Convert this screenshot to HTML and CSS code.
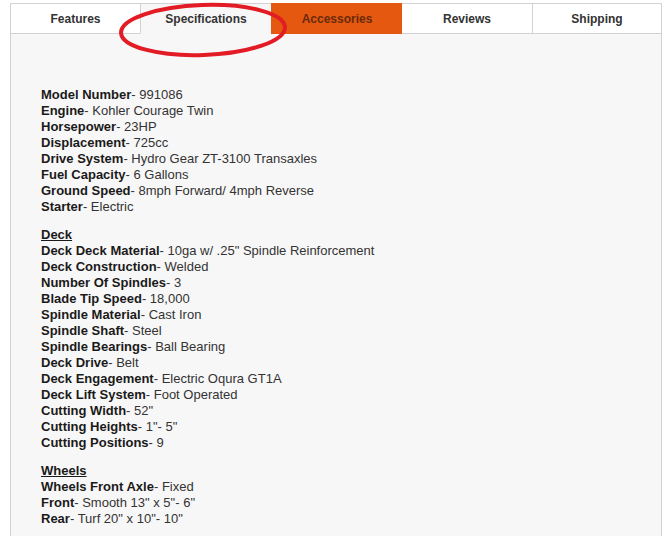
FILE: index.html
```html
<!DOCTYPE html>
<html>
<head>
<meta charset="utf-8">
<link rel="stylesheet" href="styles.css">
</head>
<body>
<div class="wrap">
  <div class="tabs">
    <div class="tab">Features</div>
    <div class="tab active">Specifications</div>
    <div class="tab orange">Accessories</div>
    <div class="tab">Reviews</div>
    <div class="tab last">Shipping</div>
  </div>
  <div class="panel">
    <div class="group">
      <div><b>Model Number</b>- 991086</div>
      <div><b>Engine</b>- Kohler Courage Twin</div>
      <div><b>Horsepower</b>- 23HP</div>
      <div><b>Displacement</b>- 725cc</div>
      <div><b>Drive System</b>- Hydro Gear ZT-3100 Transaxles</div>
      <div><b>Fuel Capacity</b>- 6 Gallons</div>
      <div><b>Ground Speed</b>- 8mph Forward/ 4mph Reverse</div>
      <div><b>Starter</b>- Electric</div>
    </div>
    <div class="group">
      <div class="head">Deck</div>
      <div><b>Deck Deck Material</b>- 10ga w/ .25" Spindle Reinforcement</div>
      <div><b>Deck Construction</b>- Welded</div>
      <div><b>Number Of Spindles</b>- 3</div>
      <div><b>Blade Tip Speed</b>- 18,000</div>
      <div><b>Spindle Material</b>- Cast Iron</div>
      <div><b>Spindle Shaft</b>- Steel</div>
      <div><b>Spindle Bearings</b>- Ball Bearing</div>
      <div><b>Deck Drive</b>- Belt</div>
      <div><b>Deck Engagement</b>- Electric Oqura GT1A</div>
      <div><b>Deck Lift System</b>- Foot Operated</div>
      <div><b>Cutting Width</b>- 52"</div>
      <div><b>Cutting Heights</b>- 1"- 5"</div>
      <div><b>Cutting Positions</b>- 9</div>
    </div>
    <div class="group">
      <div class="head">Wheels</div>
      <div><b>Wheels Front Axle</b>- Fixed</div>
      <div><b>Front</b>- Smooth 13" x 5"- 6"</div>
      <div><b>Rear</b>- Turf 20" x 10"- 10"</div>
    </div>
  </div>
  <svg class="circle" width="180" height="64" viewBox="0 0 180 64">
    <ellipse cx="92" cy="30" rx="82" ry="25" fill="none" stroke="#e21b25" stroke-width="4" transform="rotate(-2 92 30)"/>
  </svg>
</div>
</body>
</html>
```
FILE: styles.css
```css
html, body {
  margin: 0;
  padding: 0;
  background: #ffffff;
}
.wrap {
  position: relative;
  margin: 3px 0 0 10px;
  width: 652px;
  font-family: "Liberation Sans", Arial, sans-serif;
}
.tabs {
  display: grid;
  grid-template-columns: 130px 131px 131px 130px 130px;
  height: 31px;
}
.tab {
  box-sizing: border-box;
  border-top: 1px solid #d2d2d2;
  border-bottom: 1px solid #d2d2d2;
  border-left: 1px solid #d2d2d2;
  background: #ffffff;
  color: #333333;
  font-size: 12px;
  font-weight: bold;
  display: flex;
  align-items: center;
  justify-content: center;
}
.tab.active {
  background: #f8f7f7;
  border-bottom-color: #f8f7f7;
}
.tab.orange {
  background: #e4590f;
  border-color: #e4590f;
  color: #6a2a0c;
}
.tab.orange + .tab {
  border-left: none;
}
.tab.last {
  border-right: 1px solid #d2d2d2;
}
.panel {
  background: #f8f7f7;
  border-left: 1px solid #d2d2d2;
  border-right: 1px solid #d2d2d2;
  padding: 53px 0 12px 30px;
  font-size: 13px;
  line-height: 16px;
  color: #333333;
}
.panel b {
  color: #1a1a1a;
}
.group {
  margin-bottom: 12px;
}
.group:last-child {
  margin-bottom: 0;
}
.head {
  font-weight: bold;
  text-decoration: underline;
  color: #1a1a1a;
}
.circle {
  position: absolute;
  left: 101px;
  top: -3px;
}
```
